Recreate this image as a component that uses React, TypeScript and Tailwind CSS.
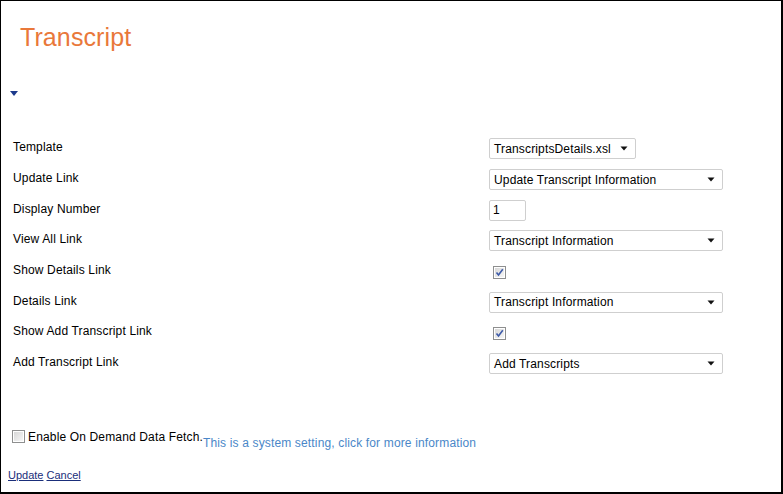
import React from "react";

function Arrow() {
  return (
    <svg width="8" height="5" viewBox="0 0 8 5" className="shrink-0">
      <path d="M0.5 0.5 L7.5 0.5 L4 4.5 Z" fill="#111" />
    </svg>
  );
}

function Select({ text, w }: { text: string; w: string }) {
  return (
    <div
      className={`${w} h-[21px] mt-[3px] flex items-center justify-between border border-[#cfcfcf] rounded-[2px] bg-white pl-[4px] pr-[7px] text-[12px] tracking-[0.15px] text-black`}
    >
      <span className="whitespace-nowrap">{text}</span>
      <Arrow />
    </div>
  );
}

function Check({ checked }: { checked: boolean }) {
  return (
    <svg width="13" height="13" viewBox="0 0 13 13" className="shrink-0">
      <defs>
        <linearGradient id={checked ? "gc" : "gu"} x1="0" y1="0" x2="1" y2="1">
          <stop offset="0" stopColor="#d8d8d8" />
          <stop offset="1" stopColor="#f6f6f6" />
        </linearGradient>
      </defs>
      <rect x="0.5" y="0.5" width="12" height="12" fill="#fff" stroke="#8e8f8f" />
      <rect x="2" y="2" width="9" height="9" fill={`url(#${checked ? "gc" : "gu"})`} />
      {checked && (
        <path d="M3.5 6.5 L5.5 9 L9.8 3.2" fill="none" stroke="#3d5aa8" strokeWidth="1.6" />
      )}
    </svg>
  );
}

const rows: { label: string; control: React.ReactNode }[] = [
  { label: "Template", control: <Select text="TranscriptsDetails.xsl" w="w-[147px]" /> },
  { label: "Update Link", control: <Select text="Update Transcript Information" w="w-[234px]" /> },
  {
    label: "Display Number",
    control: (
      <div className="w-[37px] h-[21px] mt-[3px] border border-[#cfcfcf] rounded-[2px] bg-white pl-[3px] flex items-center text-[12px] text-black">
        1
      </div>
    ),
  },
  { label: "View All Link", control: <Select text="Transcript Information" w="w-[234px]" /> },
  {
    label: "Show Details Link",
    control: (
      <div className="ml-[4px] mt-[4px] flex">
        <Check checked />
      </div>
    ),
  },
  { label: "Details Link", control: <Select text="Transcript Information" w="w-[234px]" /> },
  {
    label: "Show Add Transcript Link",
    control: (
      <div className="ml-[4px] mt-[4px] flex">
        <Check checked />
      </div>
    ),
  },
  { label: "Add Transcript Link", control: <Select text="Add Transcripts" w="w-[234px]" /> },
];

export default function App() {
  return (
    <div className="w-[783px] h-[494px] bg-white border-l border-t border-r-2 border-b-2 border-black overflow-hidden font-['Liberation_Sans',Arial,sans-serif] text-black">
      <h1 className="ml-[19px] mt-[24px] text-[25px] leading-none tracking-[0.1px] text-[#e9783a]">Transcript</h1>
      <div className="ml-[9px] mt-[41px] flex">
        <svg width="8" height="5" viewBox="0 0 8 5">
          <path d="M0 0 L8 0 L4 5 Z" fill="#1c3a8c" />
        </svg>
      </div>
      <div className="mt-[36px] pl-[12px] flex flex-col">
        {rows.map((r) => (
          <div key={r.label} className="h-[30.7px] flex items-center">
            <div className="w-[476px] text-[12px] tracking-[0.15px]">{r.label}</div>
            {r.control}
          </div>
        ))}
      </div>
      <div className="mt-[50px] ml-[11px] flex items-start">
        <div className="flex items-center gap-[3px]">
          <Check checked={false} />
          <span className="text-[12px] tracking-[0.15px] whitespace-nowrap">Enable On Demand Data Fetch.</span>
        </div>
        <span className="pt-[6px] text-[12px] tracking-[0.15px] text-[#4a87c8] whitespace-nowrap cursor-pointer">
          This is a system setting, click for more information
        </span>
      </div>
      <div className="mt-[15px] ml-[7px] text-[11px] flex gap-[3px]">
        <a className="underline text-[#1a2e7a]" href="#">Update</a>
        <a className="underline text-[#1a2e7a]" href="#">Cancel</a>
      </div>
    </div>
  );
}
